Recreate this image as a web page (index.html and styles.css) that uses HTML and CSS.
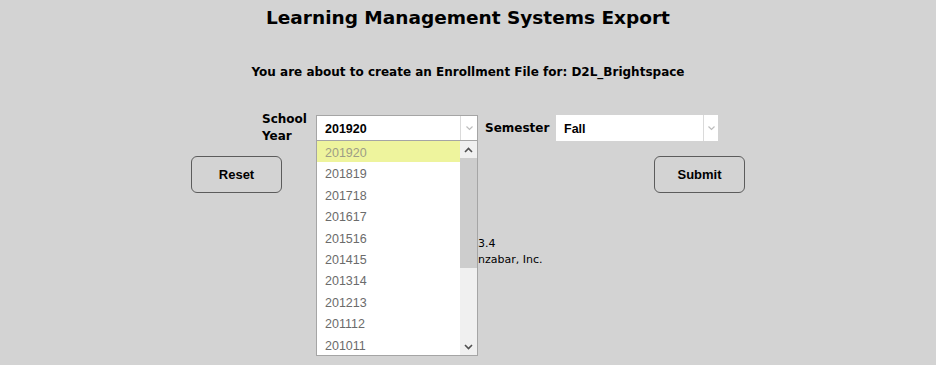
FILE: index.html
```html
<!DOCTYPE html>
<html lang="en">
<head>
  <meta charset="UTF-8">
  <title>Learning Management Systems Export</title>
  <link rel="stylesheet" href="styles.css">
</head>
<body>
  <h1>Learning Management Systems Export</h1>

  <p class="subtitle">You are about to create an Enrollment File for: D2L_Brightspace</p>

  <div class="form-row">
    <label class="field-label year-label">School<br>Year</label>
    <div class="select-box year-select">
      <span class="select-value">201920</span>
      <span class="select-arrow"><svg width="9" height="6" viewBox="0 0 9 6"><path d="M1.5 1.5 L4.5 4.5 L7.5 1.5" fill="none" stroke="#bdbdbd" stroke-width="1.2"/></svg></span>
    </div>
    <label class="field-label semester-label">Semester</label>
    <div class="select-box semester-select">
      <span class="select-value">Fall</span>
      <span class="select-arrow"><svg width="9" height="6" viewBox="0 0 9 6"><path d="M1.5 1.5 L4.5 4.5 L7.5 1.5" fill="none" stroke="#bdbdbd" stroke-width="1.2"/></svg></span>
    </div>
  </div>

  <div class="button-row">
    <button class="action-button">Reset</button>
    <button class="action-button">Submit</button>
  </div>

  <div class="footer">
    <span class="footer-head">Version 1.2.</span><span>3.4</span>
    <span class="footer-head">&copy; Je</span><span>nzabar, Inc.</span>
  </div>

  <!-- open year dropdown, drawn over the footer -->
  <div class="dropdown">
    <ul class="dropdown-list">
      <li class="selected">201920</li>
      <li>201819</li>
      <li>201718</li>
      <li>201617</li>
      <li>201516</li>
      <li>201415</li>
      <li>201314</li>
      <li>201213</li>
      <li>201112</li>
      <li>201011</li>
    </ul>
    <div class="scrollbar">
      <span class="scroll-btn"><svg width="9" height="6" viewBox="0 0 9 6"><path d="M1 5 L4.5 1.5 L8 5" fill="none" stroke="#505050" stroke-width="1.6"/></svg></span>
      <div class="scroll-track"><div class="scroll-thumb"></div></div>
      <span class="scroll-btn"><svg width="9" height="6" viewBox="0 0 9 6"><path d="M1 1 L4.5 4.5 L8 1" fill="none" stroke="#505050" stroke-width="1.6"/></svg></span>
    </div>
  </div>
</body>
</html>
```

FILE: styles.css
```css
body {
  font-family: "DejaVu Sans", sans-serif;
  margin: 0;
  background-color: #d3d3d3;
  color: #000;
  position: relative;
  height: 365px;
  overflow: hidden;
}

h1 {
  font-size: 18.5px;
  text-align: center;
  margin: 0;
  padding-top: 7px;
  line-height: 22px;
}

.subtitle {
  font-size: 12px;
  font-weight: bold;
  text-align: center;
  margin: 35px 0 0;
  line-height: 16px;
}

.form-row {
  display: flex;
  align-items: center;
  margin: 31px 0 0 262px;
  height: 34px;
}

.field-label {
  font-size: 12px;
  font-weight: bold;
  line-height: 17px;
}

.year-label {
  width: 54px;
}

.semester-label {
  width: 71px;
  margin-left: 7px;
}

.select-box {
  display: flex;
  align-items: center;
  width: 162px;
  height: 26px;
  box-sizing: border-box;
  background-color: #fff;
}

.year-select {
  border: 1px solid #a5a5a5;
}

.select-value {
  flex: 1;
  font-family: "Liberation Sans", sans-serif;
  font-size: 12.5px;
  font-weight: bold;
  padding-left: 8px;
  padding-top: 2px;
}

.select-arrow {
  width: 16px;
  height: 100%;
  border-left: 1px solid #dadada;
  display: flex;
  align-items: center;
  justify-content: center;
}

.semester-select .select-arrow {
  width: 14px;
}

.button-row {
  display: flex;
  justify-content: center;
  gap: 372px;
  margin-top: 11px;
}

.action-button {
  width: 91px;
  height: 37px;
  background-color: #d3d3d3;
  border: 1px solid #5c5c5c;
  border-radius: 6px;
  font-family: "Liberation Sans", sans-serif;
  font-size: 13px;
  font-weight: bold;
  color: #000;
  cursor: pointer;
}

.footer {
  display: grid;
  grid-template-columns: 162px max-content;
  margin: 43px 0 0 316px;
  font-size: 11px;
  line-height: 16px;
}

.footer-head {
  text-align: right;
}

.dropdown {
  position: absolute;
  left: 316px;
  top: 141px;
  width: 162px;
  height: 215px;
  box-sizing: border-box;
  border: 1px solid #a5a5a5;
  border-top: none;
  background-color: #fff;
  display: flex;
}

.dropdown-list {
  list-style: none;
  margin: 0;
  padding: 0;
  flex: 1;
}

.dropdown-list li {
  height: 21.4px;
  box-sizing: border-box;
  padding: 1px 0 0 8px;
  line-height: 22px;
  font-family: "Liberation Sans", sans-serif;
  font-size: 12.5px;
  color: #6b6b6b;
}

.dropdown-list li.selected {
  background-color: #eef49d;
  color: #9d9d86;
}

.scrollbar {
  width: 17px;
  background-color: #f0f0f0;
  display: flex;
  flex-direction: column;
}

.scroll-btn {
  height: 17px;
  display: flex;
  align-items: center;
  justify-content: center;
}

.scroll-track {
  flex: 1;
}

.scroll-thumb {
  height: 110px;
  background-color: #cdcdcd;
}
```
